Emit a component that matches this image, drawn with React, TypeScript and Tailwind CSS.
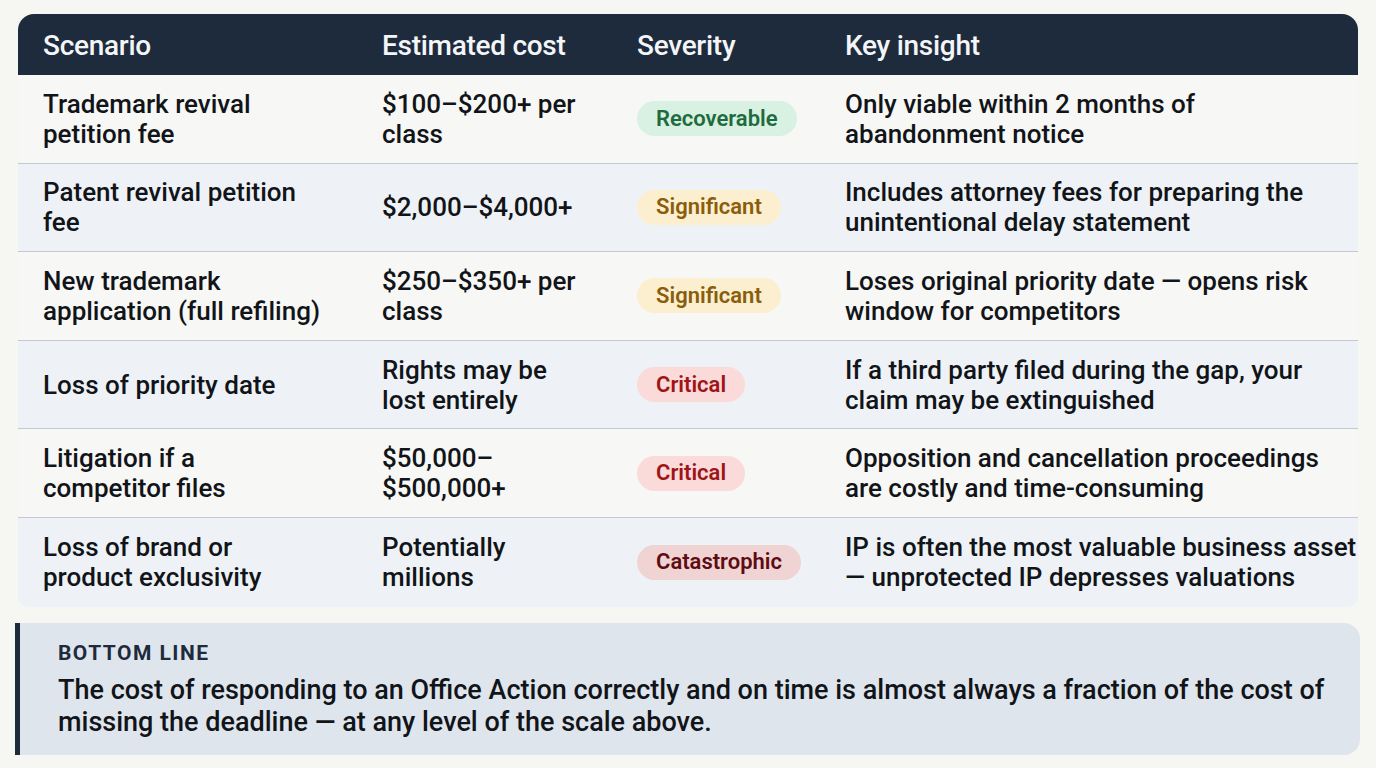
import React from "react";

type Severity = "Recoverable" | "Significant" | "Critical" | "Catastrophic";

const pillStyles: Record<Severity, string> = {
    Recoverable: "bg-[#d9f1e2] text-[#1d6b3e]",
    Significant: "bg-[#fcefcf] text-[#8a5d0c]",
    Critical: "bg-[#fbdada] text-[#9e1518]",
    Catastrophic: "bg-[#f0d3d3] text-[#5e0c14]",
};

const rows: { scenario: string[]; cost: string[]; severity: Severity; insight: string[] }[] = [
    {
        scenario: ["Trademark revival", "petition fee"],
        cost: ["$100–$200+ per", "class"],
        severity: "Recoverable",
        insight: ["Only viable within 2 months of", "abandonment notice"],
    },
    {
        scenario: ["Patent revival petition", "fee"],
        cost: ["$2,000–$4,000+"],
        severity: "Significant",
        insight: ["Includes attorney fees for preparing the", "unintentional delay statement"],
    },
    {
        scenario: ["New trademark", "application (full refiling)"],
        cost: ["$250–$350+ per", "class"],
        severity: "Significant",
        insight: ["Loses original priority date — opens risk", "window for competitors"],
    },
    {
        scenario: ["Loss of priority date"],
        cost: ["Rights may be", "lost entirely"],
        severity: "Critical",
        insight: ["If a third party filed during the gap, your", "claim may be extinguished"],
    },
    {
        scenario: ["Litigation if a", "competitor files"],
        cost: ["$50,000–", "$500,000+"],
        severity: "Critical",
        insight: ["Opposition and cancellation proceedings", "are costly and time-consuming"],
    },
    {
        scenario: ["Loss of brand or", "product exclusivity"],
        cost: ["Potentially", "millions"],
        severity: "Catastrophic",
        insight: ["IP is often the most valuable business asset", "— unprotected IP depresses valuations"],
    },
];

const cols = "grid grid-cols-[339px_255px_208px_538px]";

function Lines({ lines }: { lines: string[] }) {
    return (
        <>
            {lines.map((l, i) => (
                <span key={i} className="block whitespace-nowrap">
                    {l}
                </span>
            ))}
        </>
    );
}

export default function App() {
    return (
        <div
            className="min-h-screen w-[1376px] h-[768px] overflow-hidden bg-[#f6f6f3] pt-[14px] pl-[15px] text-[#111418]"
            style={{ fontFamily: "Roboto, 'Liberation Sans', sans-serif" }}
        >
            {/* Table */}
            <div className="ml-[3px] w-[1340px]">
                <div className={`${cols} h-[61px] items-center rounded-t-[16px] bg-[#1e2b3c] pt-[3px] text-[28px] font-medium tracking-[-0.01em] text-[#f3f5f8]`}>
                    <div className="pl-[25px]">Scenario</div>
                    <div className="pl-[25px]">Estimated cost</div>
                    <div className="pl-[25px]">Severity</div>
                    <div className="pl-[25px]">Key insight</div>
                </div>

                {rows.map((r, i) => (
                    <div
                        key={i}
                        className={`${cols} h-[88.6px] items-center text-[26px] leading-[30px] font-medium ${
                            i % 2 === 0 ? "bg-[#f7f7f5]" : "bg-[#eef2f6]"
                        } ${i < rows.length - 1 ? "border-b border-[#c5cad0]" : "rounded-b-[10px]"}`}
                    >
                        <div className="pl-[25px]">
                            <Lines lines={r.scenario} />
                        </div>
                        <div className="pl-[25px]">
                            <Lines lines={r.cost} />
                        </div>
                        <div className="pl-[25px]">
                            <span
                                className={`inline-flex h-[35px] items-center rounded-full px-[19px] text-[22px] font-semibold ${pillStyles[r.severity]}`}
                            >
                                {r.severity}
                            </span>
                        </div>
                        <div className="pl-[25px]">
                            <Lines lines={r.insight} />
                        </div>
                    </div>
                ))}
            </div>

            {/* Bottom line */}
            <div className="mt-[16px] w-[1345px] h-[132px] rounded-r-[16px] border-l-[5px] border-[#1e2b3c] bg-[#dfe5ec] pl-[38px] pt-[15px]">
                <div className="text-[21px] font-bold uppercase tracking-[0.07em] text-[#1e2b3c]">Bottom line</div>
                <p className="mt-[5px] text-[27px] leading-[32px] font-medium text-[#111418]">
                    <span className="block whitespace-nowrap">
                        The cost of responding to an Office Action correctly and on time is almost always a fraction of the cost of
                    </span>
                    <span className="block whitespace-nowrap">missing the deadline — at any level of the scale above.</span>
                </p>
            </div>
        </div>
    );
}
